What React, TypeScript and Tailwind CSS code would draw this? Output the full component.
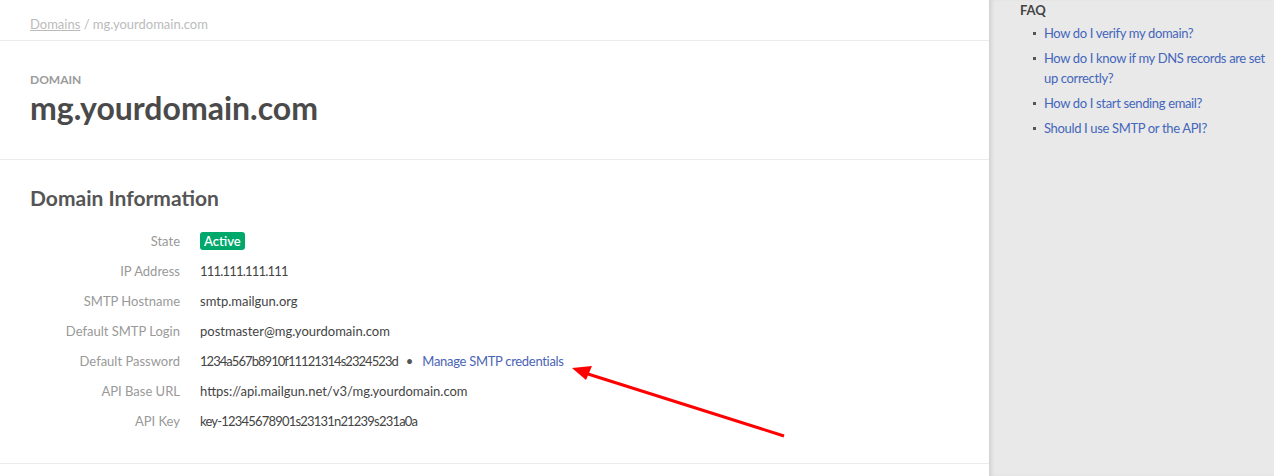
import React from "react";

const num = "tracking-[-0.8px]";

const rows: { label: string; value: React.ReactNode }[] = [
  {
    label: "State",
    value: (
      <span className="inline-block rounded-[3px] bg-[#00a86b] px-[4px] text-[13px] leading-[18px] font-semibold text-white">
        Active
      </span>
    ),
  },
  { label: "IP Address", value: <span className={num}>111.111.111.111</span> },
  { label: "SMTP Hostname", value: "smtp.mailgun.org" },
  { label: "Default SMTP Login", value: "postmaster@mg.yourdomain.com" },
  {
    label: "Default Password",
    value: (
      <span>
        <span className="tracking-[-0.95px]">1234a567b8910f11121314s2324523d</span>
        <span className="ml-[8px] mr-[9px] text-[#555]">•</span>
        <a className="tracking-[-0.3px] text-[#4a64b5]">Manage SMTP credentials</a>
      </span>
    ),
  },
  { label: "API Base URL", value: "https://api.mailgun.net/v3/mg.yourdomain.com" },
  { label: "API Key", value: <span className={num}>key-12345678901s23131n21239s231a0a</span> },
];

const faqs = [
  "How do I verify my domain?",
  "How do I know if my DNS records are set up correctly?",
  "How do I start sending email?",
  "Should I use SMTP or the API?",
];

export default function App() {
  return (
    <div
      className="relative flex h-[476px] w-[1274px] overflow-hidden bg-white"
      style={{ fontFamily: "Lato, 'Liberation Sans', sans-serif" }}
    >
      <div className="w-[989px] shrink-0 bg-white">
        <div className="h-[41px] border-b border-[#ebebeb] pl-[30px] pt-[15px] text-[13px] leading-[18px] text-[#bbb]">
          <a className="underline">Domains</a> / mg.yourdomain.com
        </div>
        <div className="h-[119px] border-b border-[#ebebeb] pl-[30px] pt-[31px]">
          <div className="text-[12px] leading-[16px] font-bold uppercase text-[#9a9a9a]">Domain</div>
          <div className="mt-[1px] text-[32px] leading-[38px] font-bold text-[#4a4a4a]">mg.yourdomain.com</div>
        </div>
        <div className="h-[304px] border-b border-[#ebebeb] pl-[30px] pt-[24px]">
          <h2 className="text-[21px] leading-[28px] font-bold text-[#555]">Domain Information</h2>
          <div className="mt-[15px] flex flex-col">
            {rows.map((r) => (
              <div key={r.label} className="flex h-[30px] items-center text-[13px]">
                <div className="w-[170px] shrink-0 pr-[20px] text-right text-[#999]">{r.label}</div>
                <div className="text-[#444]">{r.value}</div>
              </div>
            ))}
          </div>
        </div>
      </div>
      <div className="flex-1 bg-[#e9e9e9] pl-[31px] pt-[1px] shadow-[inset_4px_0_4px_-2px_rgba(0,0,0,0.12)]">
        <div className="text-[13px] leading-[18px] font-bold text-[#444]">FAQ</div>
        <ul className="mt-[4px] pl-[13px]">
          {faqs.map((q) => (
            <li key={q} className="mb-[5px] flex text-[13px] leading-[20px]">
              <span className="mt-[9px] mr-[8px] h-[3px] w-[3px] shrink-0 bg-[#555]" />
              <a className="w-[228px] tracking-[-0.35px] text-[#4466bb]">{q}</a>
            </li>
          ))}
        </ul>
      </div>
      <svg className="pointer-events-none absolute left-0 top-0" width="1274" height="476">
        <line x1="784" y1="436" x2="588" y2="374" stroke="#f00" strokeWidth="3" />
        <polygon points="572,368 592,366 586,380" fill="#f00" />
      </svg>
    </div>
  );
}
